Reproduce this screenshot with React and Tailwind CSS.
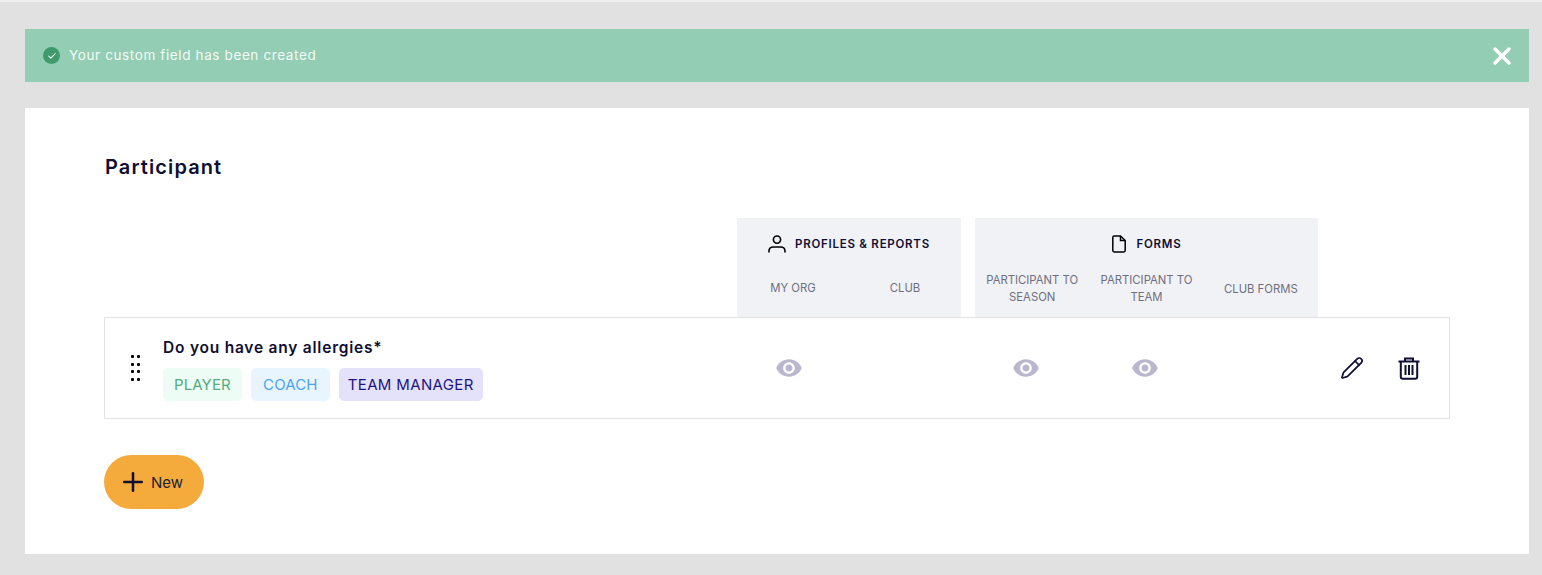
import React from "react";
import { X, Check, Plus, Pencil } from "lucide-react";

const Eye = ({ className = "" }) => (
  <svg viewBox="0 0 24 24" className={`w-[28px] h-[28px] shrink-0 ${className}`} fill="#b9b6cd">
    <path d="M12 4.5C7 4.5 2.73 7.61 1 12c1.73 4.39 6 7.5 11 7.5s9.27-3.11 11-7.5c-1.73-4.39-6-7.5-11-7.5zM12 17c-2.76 0-5-2.24-5-5s2.24-5 5-5 5 2.24 5 5-2.24 5-5 5zm0-8c-1.66 0-3 1.34-3 3s1.34 3 3 3 3-1.34 3-3-1.34-3-3-3z" />
  </svg>
);

const Trash = () => (
  <svg viewBox="0 0 22 24" className="w-[22px] h-[24px]" fill="none" stroke="#0f0e33" strokeWidth="2">
    <path d="M0.5 5.5h21" />
    <path d="M7 5V2.5h8V5" />
    <path d="M2.8 5.5v15.2c0 1.2.8 2 2 2h12.4c1.2 0 2-.8 2-2V5.5" />
    <path d="M7.5 9v10M11 9v10M14.5 9v10" />
  </svg>
);

const DragDots = () => (
  <svg viewBox="0 0 9 26" className="w-[9px] h-[26px]" fill="#000">
    {[0, 8, 15, 23].map((y) => (
      <React.Fragment key={y}>
        <rect x="0" y={y} width="3" height="3" rx="1" />
        <rect x="6" y={y} width="3" height="3" rx="1" />
      </React.Fragment>
    ))}
  </svg>
);

const Person = () => (
  <svg viewBox="0 0 18 18" className="w-[18px] h-[18px]" fill="none" stroke="#000" strokeWidth="1.6">
    <circle cx="9" cy="4.6" r="3.6" />
    <path d="M1 17.5v-1.5c0-2.6 2-4 4.5-4h7c2.5 0 4.500 1.400 4.500 4v1.500" />
  </svg>
);

const Doc = () => (
  <svg viewBox="0 0 14 18" className="w-[14px] h-[18px]" fill="none" stroke="#000" strokeWidth="1.5">
    <path d="M8.500 1H2.200C1.400 1 .8 1.600 .8 2.400v13.200c0 .8.600 1.400 1.400 1.400h9.600c.8 0 1.400-.6 1.400-1.400V5.500z" />
    <path d="M8.500 1v4.500h4.700" />
  </svg>
);

const SubHead = ({ className = "", children }) => (
  <div className={`text-[11.3px] leading-[17px] text-[#6f6e80] text-center ${className}`}>
    {children}
  </div>
);

const App = () => {
  return (
    <div className="h-[575px] overflow-hidden bg-[#e1e1e1] border-t-2 border-[#efefef] pl-[25px] pr-[13px] pt-[27px] font-['Inter','Liberation_Sans',sans-serif]">
      {/* Success banner */}
      <div className="h-[53px] bg-[#93cdb3] flex items-center pl-[18px] pr-[13px]">
        <div className="w-[17px] h-[17px] rounded-full bg-[#3f9b6c] flex items-center justify-center">
          <Check className="w-[10px] h-[10px] text-white" strokeWidth={2.5} />
        </div>
        <span className="ml-[9px] text-[13.5px] tracking-[0.62px] text-[#f4faf7]">
          Your custom field has been created
        </span>
        <X className="ml-auto w-[28px] h-[28px] text-white" strokeWidth={3} />
      </div>

      {/* Card */}
      <div className="mt-[26px] h-[446px] bg-white px-[79px] pt-[46px]">
        <h2 className="ml-[1px] text-[20px] leading-[26px] font-semibold tracking-[1.1px] text-[#0f0e33]">Participant</h2>

        <div className="mt-[38px] flex pl-[633px]">
          <div className="w-[224px] h-[99px] bg-[#f1f2f6] pt-[17px]">
            <div className="flex items-center justify-center gap-[9px]">
              <Person />
              <span className="pt-[1px] text-[11.5px] font-semibold tracking-[0.75px] text-[#0f0e33]">PROFILES &amp; REPORTS</span>
            </div>
            <div className="mt-[27px] grid grid-cols-2">
              <SubHead>MY ORG</SubHead>
              <SubHead>CLUB</SubHead>
            </div>
          </div>
          <div className="ml-[14px] w-[343px] h-[99px] bg-[#f1f2f6] pt-[17px]">
            <div className="flex items-center justify-center gap-[11px]">
              <Doc />
              <span className="pt-[1px] text-[11.5px] font-semibold tracking-[0.75px] text-[#0f0e33]">FORMS</span>
            </div>
            <div className="mt-[19px] grid grid-cols-3 items-center">
              <SubHead>PARTICIPANT TO<br />SEASON</SubHead>
              <SubHead>PARTICIPANT TO<br />TEAM</SubHead>
              <SubHead>CLUB FORMS</SubHead>
            </div>
          </div>
        </div>

        {/* Field row */}
        <div className="h-[102px] border border-[#e1e1e6] flex items-center">
          <div className="ml-[26px]"><DragDots /></div>
          <div className="ml-[23px] w-[593px] pt-[3px] pb-[1px]">
            <div className="text-[15.5px] leading-[20px] font-semibold tracking-[0.78px] text-[#0f0e33]">Do you have any allergies*</div>
            <div className="mt-[10px] flex gap-[9px]">
              <span className="h-[33px] px-[11px] rounded-[5px] bg-[#edfcf5] text-[#55ab7f] text-[15px] tracking-[0.1px] leading-[33px]">PLAYER</span>
              <span className="h-[33px] w-[79px] text-center rounded-[5px] bg-[#e9f5fe] text-[#4ca3f5] text-[15px] tracking-[0.1px] leading-[33px]">COACH</span>
              <span className="h-[33px] px-[9px] rounded-[5px] bg-[#e4e1fa] text-[#1d1480] text-[15px] tracking-[0.35px] leading-[33px]">TEAM MANAGER</span>
            </div>
          </div>
          <Eye className="ml-[19px]" />
          <Eye className="ml-[209px]" />
          <Eye className="ml-[91px]" />
          <Pencil className="ml-[181px] w-[24px] h-[24px] text-[#0f0e33]" strokeWidth={1.7} />
          <div className="ml-[34px]"><Trash /></div>
        </div>

        <button className="mt-[36px] w-[100px] h-[54px] rounded-full bg-[#f5ab3c] flex items-center pl-[14px] gap-[3px] text-[#201e33]">
          <Plus className="w-[30px] h-[30px] text-[#0f0e33]" strokeWidth={2} />
          <span className="text-[15px] leading-[20px] pt-[2px]">New</span>
        </button>
      </div>
    </div>
  );
};

export default App;
